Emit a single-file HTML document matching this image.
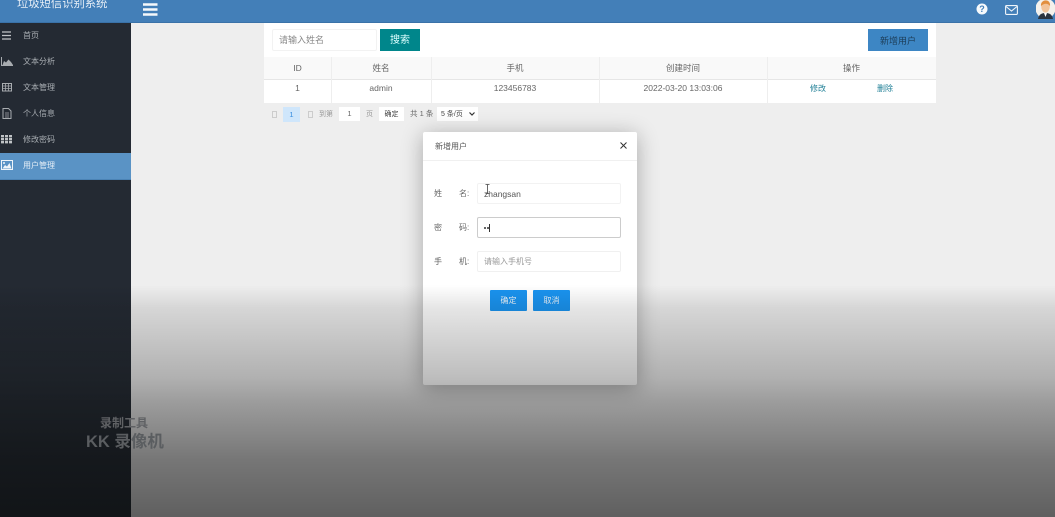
<!DOCTYPE html>
<html lang="zh"><head><meta charset="utf-8"><title>垃圾短信识别系统</title>
<style>
*{box-sizing:border-box}
html,body{margin:0;width:1055px;height:517px;overflow:hidden;background:#eee;font-family:"Liberation Sans","Noto Sans CJK SC",sans-serif}
.abs,.abs *{position:absolute}
.abs{filter:blur(.35px)}
.t{white-space:nowrap;line-height:1}
.top{left:0;top:0;width:1055px;height:23px;background:#437fb8;border-bottom:1px solid #3a72a8}
.side{left:0;top:23px;width:131px;height:494px;background:linear-gradient(180deg,#242a33 0,#242a33 55%,#2c333b 100%)}
.mi{left:23px;font-size:8px;color:#a9aeb3}
.ic{left:1px}
.cell{top:57px;height:46px;border-left:1px solid #eee}
.ct{font-size:8.5px;color:#666;text-align:center;line-height:1}
.input{background:#fff;border:1px solid #ececec;border-radius:2px}
.btn{background:#1a94f0;color:#e8f2fb;font-size:8px;text-align:center;line-height:22px;border-radius:1px;width:37px;height:21px}
</style></head>
<body>
<div class="abs" style="left:0;top:0;width:1055px;height:517px">
 <div style="left:131px;top:23px;width:924px;height:494px;background:#eee"></div>
 <div class="top"></div>
 <div class="t" style="left:17px;top:-1px;font-size:11.3px;color:#e6eef6">垃圾短信识别系统</div>
 <svg style="left:143px;top:3px" width="15" height="13" viewBox="0 0 15 13"><path d="M0 1.500H14.500M0 6.500H14.500M0 11.500H14.500" stroke="#f5f8fb" stroke-width="2.400"/></svg>
 <svg style="left:976px;top:3px" width="12" height="12" viewBox="0 0 12 12"><circle cx="6" cy="6" r="5.500" fill="#f7fafc"/><text x="6" y="9.200" font-size="9" font-weight="bold" text-anchor="middle" fill="#437fb8" font-family="Liberation Sans">?</text></svg>
 <svg style="left:1005px;top:5px" width="13" height="10" viewBox="0 0 13 10"><rect x=".6" y=".6" width="11.800" height="8.800" rx="1" fill="none" stroke="#f0f5fa" stroke-width="1.100"/><path d="M1 1.500L6.500 6L12 1.500" fill="none" stroke="#f0f5fa" stroke-width="1.100"/></svg>
 <svg style="left:1036px;top:0" width="19" height="19" viewBox="0 0 19 19"><circle cx="9.500" cy="8.500" r="10" fill="#f4f1ec"/><path d="M2 19C3 14 6 13 9.500 13S16 14 17 19Z" fill="#2b3440"/><path d="M8 13L9.500 17L11 13Z" fill="#fff"/><ellipse cx="9.500" cy="6.500" rx="4.300" ry="6" fill="#f2c49a"/><path d="M5 6C4 -1 15 -2 14 6C12 3 8 3 5 6Z" fill="#e28f3e"/></svg>

 <div class="side"></div>
 <div style="left:0;top:153px;width:131px;height:27px;background:#5a93c5;border-bottom:1px solid #4b83b5"></div>
 <svg class="ic" style="left:2px;top:31px" width="9" height="9"><path d="M0 1H9M0 4.500H9M0 8H9" stroke="#c0c3c6" stroke-width="1.300"/></svg>
 <svg class="ic" style="top:57px" width="12" height="9" viewBox="0 0 12 9"><path d="M.5 0V8.500H12" stroke="#a8acb0" fill="none"/><path d="M1.500 8L3 4L5 5.500L7.500 2.500L10 5L12 8Z" fill="#a8acb0"/></svg>
 <svg class="ic" style="left:2px;top:83px" width="10" height="9" viewBox="0 0 10 9"><rect x=".5" y=".5" width="9" height="7.500" fill="none" stroke="#a8acb0"/><path d="M0 3H10M0 5.500H10M3.500 0V8M6.500 0V8" stroke="#a8acb0" stroke-width=".8"/></svg>
 <svg class="ic" style="left:2px;top:108px" width="10" height="11" viewBox="0 0 10 11"><path d="M1 .5H6.500L9 3V10.500H1Z" fill="none" stroke="#a8acb0"/><path d="M3 5H7M3 7H7M3 9H7" stroke="#a8acb0" stroke-width=".8"/></svg>
 <svg class="ic" style="top:135px" width="11" height="9" viewBox="0 0 11 9"><path d="M1.500 0V9M5.500 0V9M9.500 0V9" stroke="#c0c3c6" stroke-width="3" stroke-dasharray="2.400 .6"/></svg>
 <svg class="ic" style="top:160px" width="12" height="10" viewBox="0 0 12 10"><rect x=".5" y=".5" width="11" height="9" fill="#5a93c5" stroke="#eef4f9"/><path d="M1.500 8.500L4 5L6 6.500L8.500 3L10.500 8.500Z" fill="#eef4f9"/><circle cx="3" cy="3" r="1" fill="#eef4f9"/></svg>
 <div class="t mi" style="top:32px">首页</div>
 <div class="t mi" style="top:58px">文本分析</div>
 <div class="t mi" style="top:84px">文本管理</div>
 <div class="t mi" style="top:110px">个人信息</div>
 <div class="t mi" style="top:136px">修改密码</div>
 <div class="t mi" style="top:162px;color:#e6eff7">用户管理</div>

 <div style="left:264px;top:23px;width:672px;height:34px;background:#fff"></div>
 <div style="left:264px;top:57px;width:672px;height:23px;background:#f9f9f9;border-bottom:1px solid #e6e6e6"></div>
 <div style="left:264px;top:80px;width:672px;height:23px;background:#fff"></div>
 <div class="input" style="left:272px;top:29px;width:105px;height:22px;border-color:#f2f2f2"></div>
 <div class="t" style="left:279px;top:36px;font-size:9px;color:#888">请输入姓名</div>
 <div class="t" style="left:380px;top:29px;width:40px;height:22px;background:#00868b;color:#dff;font-size:10px;text-align:center;line-height:24px">搜索</div>
 <div class="t" style="left:868px;top:29px;width:60px;height:22px;background:#3d86c4;color:#1d3d58;font-size:9px;text-align:center;line-height:24px">新增用户</div>
 <div class="cell" style="left:331px"></div><div class="cell" style="left:431px"></div><div class="cell" style="left:599px"></div><div class="cell" style="left:767px"></div>
 <div class="t ct" style="left:264px;width:67px;top:64px">ID</div>
 <div class="t ct" style="left:331px;width:100px;top:64px">姓名</div>
 <div class="t ct" style="left:431px;width:168px;top:64px">手机</div>
 <div class="t ct" style="left:599px;width:168px;top:64px">创建时间</div>
 <div class="t ct" style="left:767px;width:169px;top:64px">操作</div>
 <div class="t ct" style="left:264px;width:67px;top:84px">1</div>
 <div class="t ct" style="left:331px;width:100px;top:84px">admin</div>
 <div class="t ct" style="left:431px;width:168px;top:84px">123456783</div>
 <div class="t ct" style="left:599px;width:168px;top:84px">2022-03-20 13:03:06</div>
 <div class="t" style="left:810px;top:85px;font-size:8px;color:#1f7f96">修改</div>
 <div class="t" style="left:877px;top:85px;font-size:8px;color:#1f7f96">删除</div>

 <div style="left:272px;top:111px;width:5px;height:7px;border:1px solid #ccc"></div>
 <div class="t" style="left:283px;top:107px;width:17px;height:15px;background:#cfe6fb;color:#3b8fe0;font-size:7.500px;text-align:center;line-height:15px">1</div>
 <div style="left:308px;top:111px;width:5px;height:7px;border:1px solid #ccc"></div>
 <div class="t" style="left:319px;top:111px;font-size:7px;color:#999">到第</div>
 <div class="t" style="left:339px;top:107px;width:21px;height:14px;background:#fff;color:#666;font-size:7.500px;text-align:center;line-height:14px">1</div>
 <div class="t" style="left:366px;top:111px;font-size:7px;color:#999">页</div>
 <div class="t" style="left:379px;top:107px;width:25px;height:14px;background:#fff;color:#444;font-size:7px;text-align:center;line-height:16px">确定</div>
 <div class="t" style="left:410px;top:110px;font-size:7.500px;color:#666">共 1 条</div>
 <div class="t" style="left:437px;top:107px;width:41px;height:14px;background:#fff;color:#444;font-size:7px;line-height:15px;padding-left:4px">5 条/页</div>
 <svg style="left:469px;top:112px" width="6" height="4"><path d="M.5 .5L3 3L5.500 .5" fill="none" stroke="#333" stroke-width="1.200"/></svg>

 <div style="left:423px;top:132px;width:214px;height:253px;background:#fff;border-radius:2px;box-shadow:0 3px 22px rgba(0,0,0,.3)"></div>
 <div style="left:423px;top:160px;width:214px;height:1px;background:#f0f0f0"></div>
 <div class="t" style="left:435px;top:143px;font-size:8px;color:#555">新增用户</div>
 <svg style="left:620px;top:142px" width="7" height="7"><path d="M.5 .5L6.500 6.500M6.500 .5L.5 6.500" stroke="#333" stroke-width="1"/></svg>
 <div class="t" style="left:434px;top:190px;font-size:8px;color:#666">姓</div><div class="t" style="left:459px;top:190px;font-size:8px;color:#666">名:</div>
 <div class="t" style="left:434px;top:224px;font-size:8px;color:#666">密</div><div class="t" style="left:459px;top:224px;font-size:8px;color:#666">码:</div>
 <div class="t" style="left:434px;top:258px;font-size:8px;color:#666">手</div><div class="t" style="left:459px;top:258px;font-size:8px;color:#666">机:</div>
 <div class="input" style="left:477px;top:183px;width:144px;height:21px;border-color:#f2f2f2"></div>
 <div class="input" style="left:477px;top:217px;width:144px;height:21px;border-color:#ccc"></div>
 <div class="input" style="left:477px;top:251px;width:144px;height:21px;border-color:#f0f0f0"></div>
 <div class="t" style="left:484px;top:190px;font-size:8.500px;color:#555">zhangsan</div>
 <div style="left:484px;top:227px;width:2px;height:2px;background:#333;border-radius:50%"></div>
 <div style="left:487px;top:227px;width:2px;height:2px;background:#333;border-radius:50%"></div>
 <div style="left:489px;top:224px;width:1px;height:8px;background:#333"></div>
 <div class="t" style="left:484px;top:258px;font-size:8px;color:#999">请输入手机号</div>
 <svg style="left:485px;top:184px" width="5" height="10"><path d="M.5 .5H4.500M2.500 .5V9.500M.5 9.500H4.500" stroke="#444" fill="none" stroke-width=".8"/></svg>
 <div class="btn t" style="left:490px;top:290px">确定</div>
 <div class="btn t" style="left:533px;top:290px">取消</div>

 <div style="left:0;top:285px;width:1055px;height:232px;background:linear-gradient(180deg,rgba(0,0,0,0) 0,rgba(0,0,0,.1) 10%,rgba(0,0,0,.26) 40%,rgba(0,0,0,.34) 50%,rgba(0,0,0,.5) 75%,rgba(0,0,0,.6) 100%)"></div>
 <div class="t" style="left:100px;top:417px;font-size:12px;font-weight:bold;color:#5f6164">录制工具</div>
 <div class="t" style="left:86px;top:434px;font-size:16.500px;font-weight:bold;color:#5a5d60">KK 录像机</div>
</div>
</body></html>
